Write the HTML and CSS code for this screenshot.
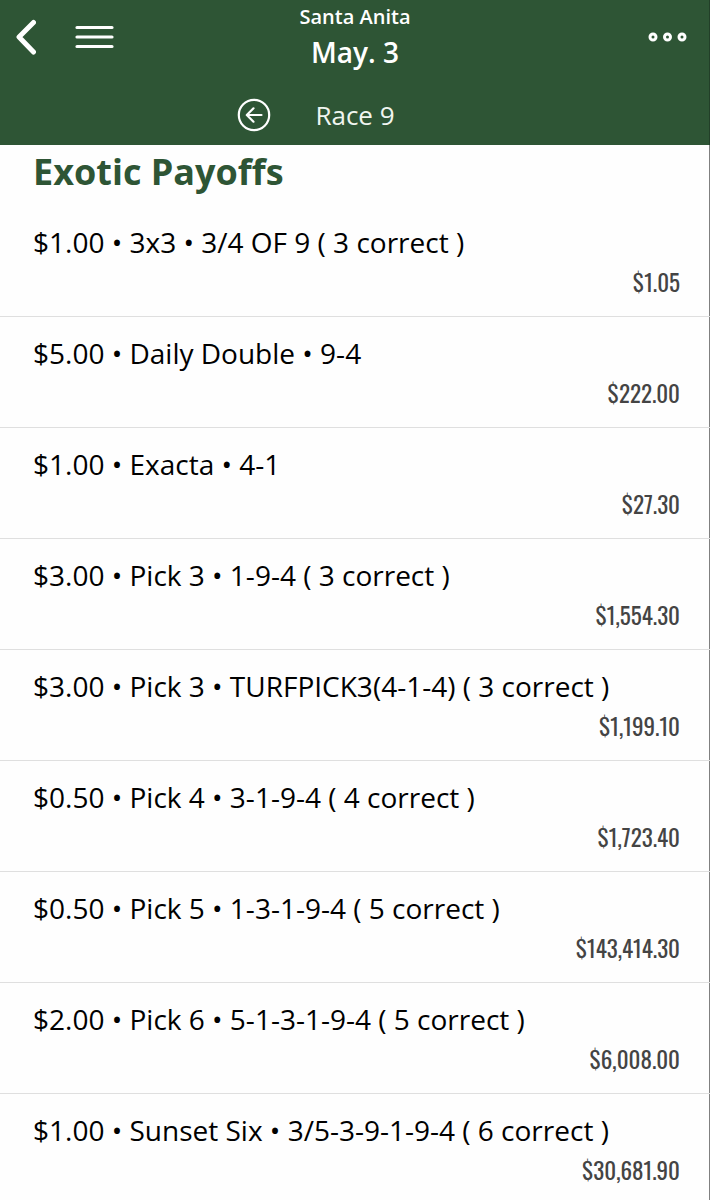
FILE: index.html
```html
<!DOCTYPE html>
<html lang="en">
<head>
    <meta charset="UTF-8">
    <meta name="viewport" content="width=device-width, initial-scale=1.0">
    <title>Santa Anita - Race 9</title>
    <link rel="stylesheet" href="styles.css">
</head>
<body>

<header class="top">
    <div class="top-bar">
        <div class="left-icons">
            <button class="icon-btn" aria-label="Back">
                <svg width="20" height="36" viewBox="0 0 20 36" fill="none" stroke="#fff" stroke-width="5" stroke-linecap="round" stroke-linejoin="round"><path d="M17.500 3.500L3 18L17.500 33"/></svg>
            </button>
            <button class="icon-btn" aria-label="Menu">
                <svg width="40" height="24" viewBox="0 0 40 24" fill="none" stroke="#fff" stroke-width="3.200" stroke-linecap="round"><path d="M2 2.500H37M2 12H37M2 21.500H37"/></svg>
            </button>
        </div>
        <h1 class="heading">
            <span class="track">Santa Anita</span>
            <span class="date">May. 3</span>
        </h1>
        <div class="right-icons">
            <button class="icon-btn" aria-label="More">
                <svg width="40" height="12" viewBox="0 0 40 12" fill="none" stroke="#fff" stroke-width="3"><circle cx="6" cy="6" r="3"/><circle cx="20.500" cy="6" r="3"/><circle cx="35" cy="6" r="3"/></svg>
            </button>
        </div>
    </div>
    <nav class="race-nav">
        <button class="icon-btn prev-race" aria-label="Previous race">
            <svg width="34" height="34" viewBox="0 0 34 34" fill="none" stroke="#fff" stroke-width="2.200" stroke-linecap="round" stroke-linejoin="round"><circle cx="17" cy="17" r="15.200"/><path d="M24.500 17H10M16.500 10.300L9.800 17L16.500 23.700"/></svg>
        </button>
        <span class="race">Race 9</span>
    </nav>
</header>

<main class="payoffs">
    <h2>Exotic Payoffs</h2>
    <ul class="payoff-list">
        <li>
            <span class="bet">$1.00 • 3x3 • 3/4 OF 9 ( 3 correct )</span>
            <span class="amount">$1.05</span>
        </li>
        <li>
            <span class="bet">$5.00 • Daily Double • 9-4</span>
            <span class="amount">$222.00</span>
        </li>
        <li>
            <span class="bet">$1.00 • Exacta • 4-1</span>
            <span class="amount">$27.30</span>
        </li>
        <li>
            <span class="bet">$3.00 • Pick 3 • 1-9-4 ( 3 correct )</span>
            <span class="amount">$1,554.30</span>
        </li>
        <li>
            <span class="bet">$3.00 • Pick 3 • TURFPICK3(4-1-4) ( 3 correct )</span>
            <span class="amount">$1,199.10</span>
        </li>
        <li>
            <span class="bet">$0.50 • Pick 4 • 3-1-9-4 ( 4 correct )</span>
            <span class="amount">$1,723.40</span>
        </li>
        <li>
            <span class="bet">$0.50 • Pick 5 • 1-3-1-9-4 ( 5 correct )</span>
            <span class="amount">$143,414.30</span>
        </li>
        <li>
            <span class="bet">$2.00 • Pick 6 • 5-1-3-1-9-4 ( 5 correct )</span>
            <span class="amount">$6,008.00</span>
        </li>
        <li>
            <span class="bet">$1.00 • Sunset Six • 3/5-3-9-1-9-4 ( 6 correct )</span>
            <span class="amount">$30,681.90</span>
        </li>
    </ul>
</main>

</body>
</html>
```

FILE: styles.css
```css
* {
    box-sizing: border-box;
}

body {
    font-family: "Open Sans", "Noto Sans", sans-serif;
    margin: 0;
    color: #000;
    background: #fefefe;
}

.top {
    background: #2e5535;
    color: #fff;
    padding: 4px 16px 13px;
    box-shadow: inset -1px 0 #223f28;
}

.top-bar {
    display: grid;
    grid-template-columns: 1fr auto 1fr;
    align-items: center;
}

.left-icons {
    display: flex;
    align-items: center;
    gap: 39px;
    padding-bottom: 5px;
}

.right-icons {
    display: flex;
    justify-content: flex-end;
    padding: 0 7px 5px 0;
}

.icon-btn {
    background: none;
    border: none;
    padding: 0;
    cursor: pointer;
}

.icon-btn svg {
    display: block;
}

.heading {
    display: flex;
    flex-direction: column;
    align-items: center;
    margin: 0;
    font-weight: 600;
}

.track {
    font-size: 20px;
    line-height: 26px;
}

.date {
    font-size: 28px;
    line-height: 44px;
}

.race-nav {
    display: grid;
    grid-template-columns: 1fr auto 1fr;
    align-items: center;
    column-gap: 44px;
    padding-top: 24px;
}

.prev-race {
    justify-self: end;
}

.race {
    font-size: 26px;
    line-height: 34px;
    color: #f0f5f0;
}

.payoffs {
    box-shadow: inset -1px 0 #808080;
}

.payoffs h2 {
    margin: 0;
    padding: 5px 33px 12px;
    font-size: 36px;
    line-height: 44px;
    color: #2e5535;
}

.payoff-list {
    list-style: none;
    margin: 0;
    padding: 0;
}

.payoff-list li {
    display: flex;
    flex-direction: column;
    padding: 16px 30px 13px 33px;
    border-bottom: 1px solid #dfdfdf;
}

.payoff-list li:last-child {
    border-bottom: none;
    padding-bottom: 9px;
}

.bet {
    font-size: 28px;
    line-height: 40px;
}

.amount {
    align-self: flex-end;
    font-family: Oswald, "Liberation Sans Narrow", "Open Sans", sans-serif;
    font-size: 23px;
    line-height: 41px;
    color: #444;
}
```
